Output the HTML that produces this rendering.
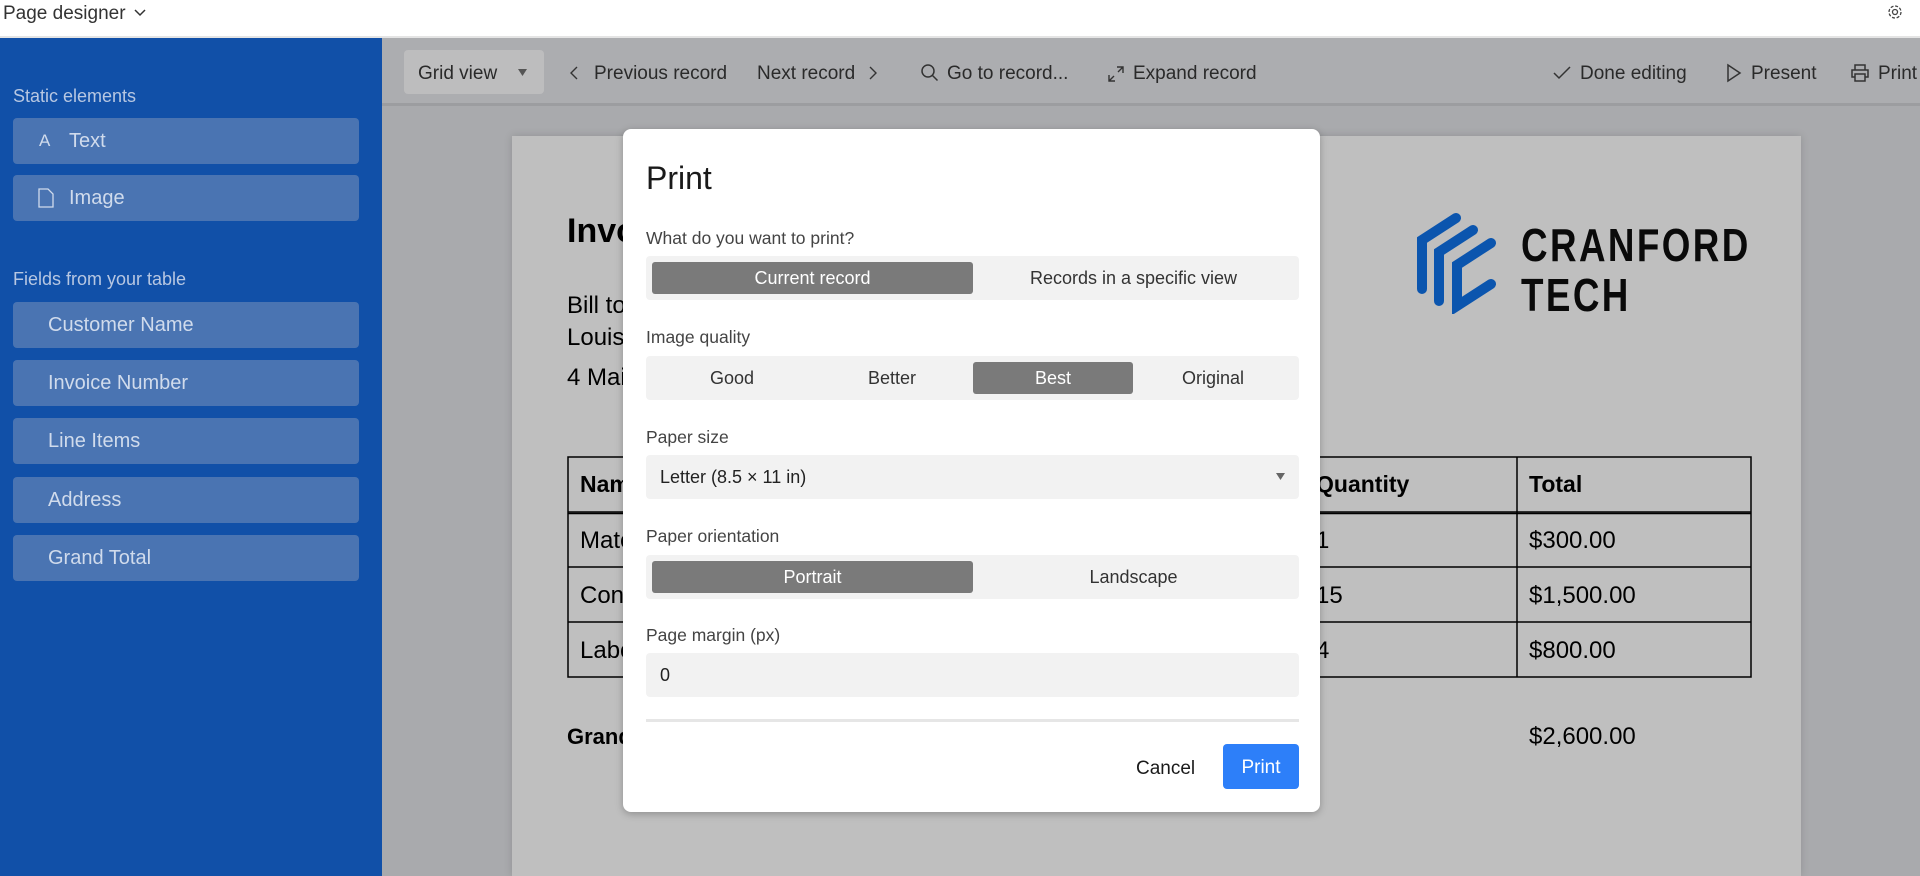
<!DOCTYPE html>
<html><head><meta charset="utf-8"><style>
*{margin:0;padding:0;box-sizing:border-box}
body{width:1920px;height:876px;overflow:hidden;background:#a9aaad;font-family:"Liberation Sans",sans-serif;position:relative;color:#222}
.a{position:absolute;white-space:nowrap}
#top{left:0;top:0;width:1920px;height:38px;background:#fff;border-bottom:2px solid #e4e4e4}
#side{left:0;top:38px;width:382px;height:838px;background:#1150a8}
.sh{color:#b7c7e2;font-size:18px}
.sb{left:13px;width:346px;height:46px;background:#4a74b2;border-radius:4px;color:#d0dbec;font-size:20px;line-height:46px}
#tb{left:382px;top:38px;width:1538px;height:68px;background:#acadb0;border-bottom:3px solid #9c9da0}
.t{font-size:19px;color:#2a2a2a;top:63px}
#paper{left:512px;top:136px;width:1289px;height:740px;background:#bfbfbf;box-shadow:0 0 8px rgba(0,0,0,.15)}
.p{color:#000;font-size:24px}
#modal{left:623px;top:129px;width:697px;height:683px;background:#fff;border-radius:8px;box-shadow:0 2px 8px rgba(0,0,0,.25)}
.lab{font-size:17.5px;color:#444;left:23px}
.seg{left:23px;width:653px;height:44px;background:#f2f2f2;border-radius:4px}
.opt{position:absolute;top:6px;height:32px;line-height:32px;text-align:center;font-size:18px;color:#333}
.sel{background:#7a7a7a;color:#fff;border-radius:3px}
.logo{font-size:46px;font-weight:bold;color:#0a0a0a;letter-spacing:3px;transform:scaleX(.8);transform-origin:left top}
</style></head><body>
<div id="top" class="a"><span class="a" style="left:3px;top:3px;font-size:19px;color:#333">Page designer</span>
<svg class="a" style="left:133px;top:8px" width="14" height="10"><path d="M2 2l5 5 5-5" stroke="#333" stroke-width="1.5" fill="none"/></svg>
<svg class="a" style="left:1886px;top:3px" width="18" height="18" viewBox="0 0 18 18"><circle cx="9" cy="9" r="2.5" stroke="#444" fill="none" stroke-width="1.3"/><circle cx="9" cy="9" r="6" stroke="#444" fill="none" stroke-width="1.3" stroke-dasharray="3 1.7"/></svg></div>

<div id="side" class="a">
<span class="a sh" style="left:13px;top:48px">Static elements</span>
<div class="a sb" style="top:80px;padding-left:56px"><span style="position:absolute;left:26px;font-size:17px">A</span>Text</div>
<div class="a sb" style="top:137px;padding-left:56px"><svg style="position:absolute;left:25px;top:13px" width="16" height="20"><path d="M1 1h9l5 5v13H1z" stroke="#d0dbec" fill="none" stroke-width="1.3"/></svg>Image</div>
<span class="a sh" style="left:13px;top:231px">Fields from your table</span>
<div class="a sb" style="top:264px;padding-left:35px">Customer Name</div>
<div class="a sb" style="top:322px;padding-left:35px">Invoice Number</div>
<div class="a sb" style="top:380px;padding-left:35px">Line Items</div>
<div class="a sb" style="top:439px;padding-left:35px">Address</div>
<div class="a sb" style="top:497px;padding-left:35px">Grand Total</div>
</div>

<div id="tb" class="a"></div>
<div class="a" style="left:404px;top:50px;width:140px;height:44px;background:#bdbdbe;border-radius:4px"></div>
<span class="a t" style="left:418px">Grid view</span>
<svg class="a" style="left:518px;top:69px" width="10" height="8"><path d="M0 0h9L4.5 7z" fill="#555"/></svg>
<svg class="a" style="left:569px;top:65px" width="10" height="16"><path d="M8 2L2 8l6 6" stroke="#333" fill="none" stroke-width="1.4"/></svg>
<span class="a t" style="left:594px">Previous record</span>
<span class="a t" style="left:757px">Next record</span>
<svg class="a" style="left:868px;top:65px" width="10" height="16"><path d="M2 2l6 6-6 6" stroke="#333" fill="none" stroke-width="1.4"/></svg>
<svg class="a" style="left:920px;top:63px" width="20" height="20"><circle cx="8" cy="8" r="6" stroke="#333" fill="none" stroke-width="1.5"/><path d="M12.5 12.5l5 5" stroke="#333" stroke-width="1.5"/></svg>
<span class="a t" style="left:947px">Go to record...</span>
<svg class="a" style="left:1107px;top:65px" width="18" height="18"><path d="M10 2h6v6M16 2l-5 5M8 16H2v-6M2 16l5-5" stroke="#333" fill="none" stroke-width="1.4"/></svg>
<span class="a t" style="left:1133px">Expand record</span>
<svg class="a" style="left:1553px;top:66px" width="18" height="14"><path d="M1 7l5 5L17 1" stroke="#333" fill="none" stroke-width="1.5"/></svg>
<span class="a t" style="left:1580px">Done editing</span>
<svg class="a" style="left:1726px;top:63px" width="16" height="20"><path d="M2 2l12 8-12 8z" stroke="#333" fill="none" stroke-width="1.5"/></svg>
<span class="a t" style="left:1751px">Present</span>
<svg class="a" style="left:1850px;top:63px" width="20" height="20"><path d="M5 7V2h10v5M5 14H2V7h16v7h-3M5 11h10v7H5z" stroke="#333" fill="none" stroke-width="1.5"/></svg>
<span class="a t" style="left:1878px">Print</span>

<div id="paper" class="a"></div>
<span class="a" style="left:567px;top:212px;font-size:34px;font-weight:bold;color:#000">Invoice</span>
<span class="a p" style="left:567px;top:292px">Bill to</span>
<span class="a p" style="left:567px;top:324px">Louis</span>
<span class="a p" style="left:567px;top:364px">4 Main</span>
<svg class="a" style="left:567px;top:456px" width="1186" height="223"><g stroke="#000" stroke-width="1.5" fill="none"><rect x="1" y="1" width="1183" height="220"/><path d="M1 56h1183M1 111h1183M1 166h1183M950 1v220"/><path d="M1 57.5h1183"/></g></svg>
<span class="a p" style="left:580px;top:471px;font-weight:bold;font-size:23px">Name</span>
<span class="a p" style="left:580px;top:527px">Materials</span>
<span class="a p" style="left:580px;top:582px">Consulting</span>
<span class="a p" style="left:580px;top:637px">Labor</span>
<span class="a p" style="left:1316px;top:471px;font-weight:bold;font-size:23px">Quantity</span>
<span class="a p" style="left:1316px;top:527px">1</span>
<span class="a p" style="left:1316px;top:582px">15</span>
<span class="a p" style="left:1316px;top:637px">4</span>
<span class="a p" style="left:1529px;top:471px;font-weight:bold;font-size:23px">Total</span>
<span class="a p" style="left:1529px;top:527px">$300.00</span>
<span class="a p" style="left:1529px;top:582px">$1,500.00</span>
<span class="a p" style="left:1529px;top:637px">$800.00</span>
<span class="a p" style="left:567px;top:724px;font-weight:bold;font-size:22px">Grand Total</span>
<span class="a p" style="left:1529px;top:723px">$2,600.00</span>
<svg class="a" style="left:1415px;top:210px" width="92" height="104"><g stroke="#0b55ae" stroke-width="10" stroke-linecap="round" fill="none"><path d="M41 8L7 30v49"/><path d="M58 20L24 42v49"/><path d="M76 33L42 55v41l34-22"/></g></svg>
<span class="a logo" style="left:1521px;top:218px">CRANFORD</span>
<span class="a logo" style="left:1521px;top:268px">TECH</span>

<div id="modal" class="a">
<span class="a" style="left:23px;top:31px;font-size:32px;color:#1a1a1a">Print</span>
<span class="a lab" style="top:99px">What do you want to print?</span>
<div class="a seg" style="top:127px"><div class="opt sel" style="left:6px;width:321px">Current record</div><div class="opt" style="left:327px;width:321px">Records in a specific view</div></div>
<span class="a lab" style="top:198px">Image quality</span>
<div class="a seg" style="top:227px"><div class="opt" style="left:6px;width:160px">Good</div><div class="opt" style="left:166px;width:160px">Better</div><div class="opt sel" style="left:327px;width:160px">Best</div><div class="opt" style="left:487px;width:160px">Original</div></div>
<span class="a lab" style="top:298px">Paper size</span>
<div class="a seg" style="top:326px"><span class="a" style="left:14px;top:12px;font-size:18px;color:#222">Letter (8.5 × 11 in)</span><svg class="a" style="left:630px;top:18px" width="10" height="8"><path d="M0 0h9L4.5 7z" fill="#666"/></svg></div>
<span class="a lab" style="top:397px">Paper orientation</span>
<div class="a seg" style="top:426px"><div class="opt sel" style="left:6px;width:321px">Portrait</div><div class="opt" style="left:327px;width:321px">Landscape</div></div>
<span class="a lab" style="top:496px">Page margin (px)</span>
<div class="a seg" style="top:524px"><span class="a" style="left:14px;top:12px;font-size:18px;color:#222">0</span></div>
<div class="a" style="left:23px;top:590px;width:653px;height:3px;background:#e6e6e6"></div>
<span class="a" style="left:513px;top:629px;font-size:19px;color:#1a1a1a">Cancel</span>
<div class="a" style="left:600px;top:615px;width:76px;height:45px;background:#2d7ff9;border-radius:4px;color:#fff;font-size:19px;line-height:47px;text-align:center">Print</div>
</div>
</body></html>
